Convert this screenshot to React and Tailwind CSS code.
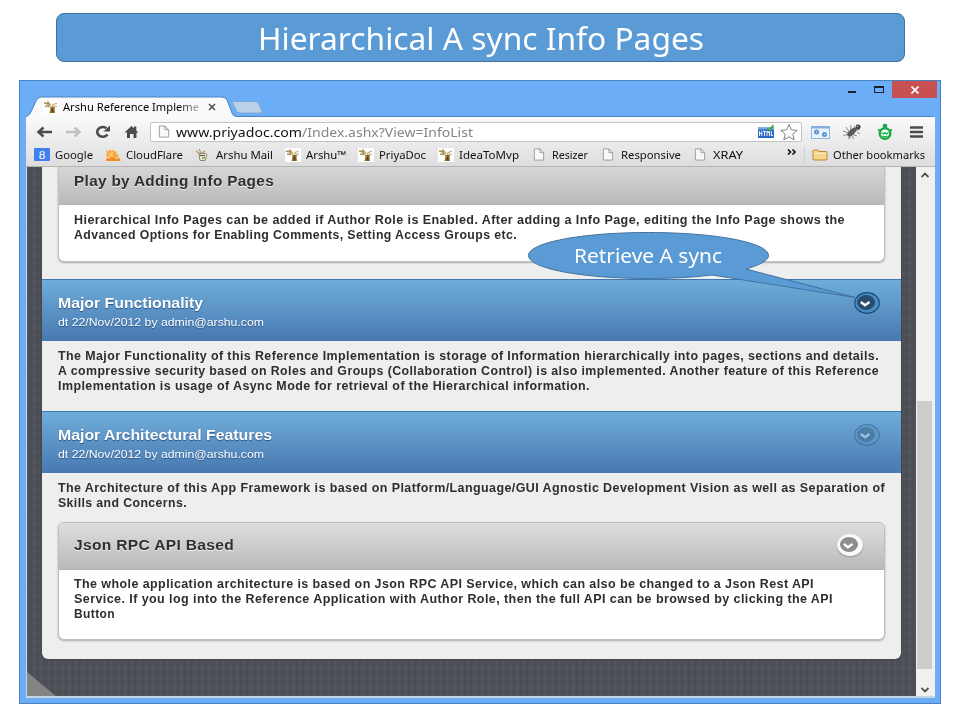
import React, { useLayoutEffect, useRef, useState } from "react";

/* Single line of text stretched horizontally to a given width. */
function Fit({ w, className = "", children }) {
  const ref = useRef(null);
  const [scale, setScale] = useState(1);
  useLayoutEffect(() => {
    setScale(w / ref.current.getBoundingClientRect().width);
  }, [w]);
  return (
    <span className={"block shrink-0 whitespace-nowrap " + className} style={{ width: w }}>
      <span ref={ref} className="inline-block origin-left" style={{ transform: `scaleX(${scale})` }}>
        {children}
      </span>
    </span>
  );
}

const ui = "font-['Noto_Sans',sans-serif]";

function Deer({ className = "" }) {
  return (
    <svg viewBox="0 0 16 14" className={"h-[14px] w-4 shrink-0 bg-white " + className}>
      <path d="M1 3l3 .5 3 3M4.500 1.500l2 3M2 6l4 .5" stroke="#b08f55" strokeWidth="1.500" fill="none" />
      <path d="M6.500 6L5 4.500l2-1.500 1.500 2z" fill="#c4a772" />
      <path d="M9 6l2-2M11 4l3-.5M11 6l3 .5" stroke="#c4a772" strokeWidth="1.200" fill="none" />
      <path d="M7 7q2.500-1 5 0l-.5 2 .5 4H6.500l1-4z" fill="#94702c" />
      <path d="M8.500 8.500h2v4h-2z" fill="#65430f" />
    </svg>
  );
}

function Page() {
  return (
    <svg viewBox="0 0 12 14" className="h-[13px] w-[12px] shrink-0">
      <path d="M1 1h6l4 4v8H1z" fill="#f8f8f8" stroke="#989898" />
      <path d="M7 1v4h4" fill="none" stroke="#989898" />
    </svg>
  );
}

function Google() {
  return (
    <span className="flex h-[13px] w-4 shrink-0 items-center justify-center rounded-[1px] bg-[#3f80ee]">
      <span className="font-['Liberation_Serif',serif] text-[13px] leading-[13px] text-white">8</span>
    </span>
  );
}

function Cloud() {
  return (
    <svg viewBox="0 0 16 14" className="h-[14px] w-4 shrink-0">
      <path d="M1 2l3 1.500L4.500 1l2 2L8.500 1.500l1 2 2-.5v3l2 1-1 6H1l1-4-1.500-2L2 6z" fill="#f8ab3e" />
      <path d="M1 13c0-3 3-4 5-3 1-3 5-2 5 0 3-1 4.500 1 4.500 3z" fill="#f38a26" />
      <path d="M4 6l4 3M2 9l3 1M9 9l4 2M7 4v3" stroke="#fff1d0" strokeWidth=".8" />
    </svg>
  );
}

function MailIcon() {
  return (
    <svg viewBox="0 0 14 14" className="h-[14px] w-[14px] shrink-0">
      <path d="M1 3l4 3M4 1l2 4M10 3l-3 2" stroke="#b39a62" strokeWidth="1.200" />
      <path d="M4 5.500h7l1 1.500-2 5.500H5z" fill="#f1eedf" stroke="#85856f" />
      <path d="M5 7.500h5" stroke="#555" strokeWidth="1.200" fill="none" />
      <path d="M7 10.500l3-1" stroke="#79a233" strokeWidth="1.500" />
    </svg>
  );
}

const bookmarks = [
  { icon: <Google />, slot: "w-[71px]", gap: "w-[21px]", w: 38, label: "Google" },
  { icon: <Cloud />, slot: "w-[90px]", gap: "w-[21px]", w: 57, label: "CloudFlare" },
  { icon: <MailIcon />, slot: "w-[90px]", gap: "w-[21px]", w: 57, label: "Arshu Mail" },
  { icon: <Deer />, slot: "w-[73px]", gap: "w-[21px]", w: 40, label: "Arshu™" },
  { icon: <Deer />, slot: "w-[80px]", gap: "w-[21px]", w: 47, label: "PriyaDoc" },
  { icon: <Deer />, slot: "w-[95px]", gap: "w-[21px]", w: 60, label: "IdeaToMvp" },
  { icon: <Page />, slot: "w-[69px]", gap: "w-[19px]", w: 36, label: "Resizer" },
  { icon: <Page />, slot: "w-[92px]", gap: "w-[19px]", w: 60, label: "Responsive" },
  { icon: <Page />, slot: "w-[93px]", gap: "w-[19px]", w: 30, label: "XRAY" },
];

function TabStrip() {
  return (
    <div className="relative flex h-[37px] items-start">
      <svg viewBox="0 0 922 37" className="absolute inset-0 h-[37px] w-[922px]">
        <path d="M6 37 Q10 36 12 32 L17 21 Q19 17 22 17 H203 Q206 17 208 20 L213 33 Q214 36.5 218 36.5 H913 Q916 36.5 916 40 V42 H6z" fill="#fafafa" stroke="#4d83c0" />
        <path d="M213.500 22.500 Q213 21.500 215 21.500 H236 Q239 21.500 240 24 L243 31.500 Q243 33 241 33 H221 Q218 33 217 30z" fill="#b9d0e8" stroke="#7ea8d8" />
      </svg>
      <div className={"relative flex h-[20px] pl-[24px] mt-[17px] items-center " + ui}>
        <Deer />
        <div className="ml-[4px] [mask-image:linear-gradient(90deg,#000_85%,#0004)]">
          <Fit w={136} className="text-[10.500px] leading-[20px] text-black">Arshu Reference Impleme</Fit>
        </div>
        <svg viewBox="0 0 8 8" className="ml-[9px] h-2 w-2"><path d="M1 1l6 6M7 1l-6 6" stroke="#505050" strokeWidth="1.6" /></svg>
      </div>
      <div className="relative ml-auto mr-[4px] mt-px flex h-[17px] items-center">
        <span className="mr-[18px] mt-[5px] h-[2px] w-[8px] bg-[#1b222b]" />
        <span className="mr-[8px] h-[7px] w-[10px] border border-t-2 border-[#1b222b]" />
        <span className="flex h-[17px] w-[45px] items-center justify-center bg-[#c75050]">
          <svg viewBox="0 0 8 8" className="h-2 w-2"><path d="M.5.5l7 7M7.500.5l-7 7" stroke="#fff" strokeWidth="1.6" /></svg>
        </span>
      </div>
    </div>
  );
}

function AddressBar() {
  return (
    <div className="flex h-[28px] items-center pt-px">
      <svg viewBox="0 0 116 20" className="ml-[8px] h-5 w-[116px] shrink-0" fill="none">
        <path d="M18 10H4.500M9.500 5.500L4.500 10l5 4.500" stroke="#4b4b4b" strokeWidth="2.500" />
        <path d="M32 10h13M40.500 5.500L45.500 10l-5 4.500" stroke="#c0c0c0" strokeWidth="2.500" />
        <path d="M72.500 6.200A5.600 4.900 0 1 0 73.500 12.500" stroke="#4b4b4b" strokeWidth="2.600" />
        <path d="M76 3.500v6h-6.500z" fill="#4b4b4b" />
        <path d="M90.500 10.500l7-6.500 2.500 2.300V4.500h2.300v4l2.200 2h-2V16h-3v-4h-3.500v4h-3v-5.500z" fill="#4b4b4b" />
      </svg>
      <div className="flex h-[20px] w-[652px] shrink-0 items-center rounded-[2px] border border-[#c3c3c3] bg-white pl-[7px]">
        <Page />
        <div className={"ml-[6px] flex text-[13px] leading-[18px] " + ui}>
          <Fit w={126} className="text-[#111]">www.priyadoc.com</Fit>
          <Fit w={171} className="text-[#858585]">/Index.ashx?View=InfoList</Fit>
        </div>
        <svg viewBox="0 0 40 18" className="ml-auto mr-[3px] h-[18px] w-[40px]">
          <rect x="0" y="4.500" width="16" height="10.500" fill="#2c6cc4" />
          <path d="M0 4.500h16v2H0z" fill="#78a8e0" />
          <path d="M1.500 8v5M3.800 8v5M1.500 10.500h2.300M5 8.400h3M6.500 8.400V13M9 13V8l1.200 2L11.400 8v5M13.300 8v4.500H15" stroke="#fff" strokeWidth=".9" fill="none" />
          <path d="M8 4.500l3 1L15.500 1 15.500 4.500 11.500 8z" fill="#44ad3f" />
          <path d="M31 2l2.400 5.400 5.800.5-4.400 3.800 1.400 5.600-5.200-3-5.200 3 1.400-5.600-4.400-3.800 5.800-.5z" fill="#fff" stroke="#808080" transform="translate(0 -.5)" />
        </svg>
      </div>
      <svg viewBox="0 0 114 20" className="ml-[9px] h-5 w-[114px] shrink-0">
        <rect x=".5" y="4.500" width="18" height="12" fill="#e9f3fb" stroke="#8fb5e2" />
        <path d="M0 4h19v2.500H0z" fill="#83aedf" />
        <circle cx="5.500" cy="10" r="1.600" fill="none" stroke="#5c8fcc" strokeWidth="1.800" />
        <circle cx="13.500" cy="12.500" r="1.600" fill="none" stroke="#5c8fcc" strokeWidth="1.800" />
        <path d="M32 9l14 5M35 5l8 12M40 3l-1 14M32 14l17-7M44 4l-7 13M45 3l5 2M46 10l3 2" stroke="#808080" strokeWidth=".9" />
        <ellipse cx="41" cy="10" rx="6" ry="2.600" transform="rotate(-42 41 10)" fill="#5a5a5a" />
        <circle cx="47" cy="5" r="2.400" fill="#3b3b3b" /><circle cx="46.500" cy="4.500" r=".8" fill="#ddd" />
        <circle cx="74" cy="11.500" r="5.300" fill="#e8fff0" stroke="#16aa47" strokeWidth="2.400" />
        <circle cx="74" cy="4" r="2.300" fill="#16aa47" /><path d="M67 7.500l2.500 1.500M81 7.500l-2.500 1.500" stroke="#16aa47" strokeWidth="1.800" />
        <path d="M70.500 10.500l2 1.500 1.500-1.500 1.500 1.500 2-1.500M71.500 14q2.500 1.500 5 0" stroke="#16aa47" strokeWidth="1.100" fill="none" />
        <path d="M99 5.500h13M99 10h13M99 14.500h13" stroke="#4b4b4b" strokeWidth="2.400" />
      </svg>
    </div>
  );
}

function BookmarkBar() {
  return (
    <div className={"flex h-[21px] items-center pl-[8px] pb-[2px] text-[10.500px] leading-[18px] text-[#111] " + ui}>
      {bookmarks.map((b, i) => (
        <div key={i} className={"flex shrink-0 items-center " + b.slot}>
          <span className={"shrink-0 " + b.gap}>{b.icon}</span>
          <Fit w={b.w}>{b.label}</Fit>
        </div>
      ))}
      <svg viewBox="0 0 9 6" className="mb-[6px] h-[6px] w-[9px] shrink-0"><path d="M1 .5L3.500 3 1 5.500M5.500.5L8 3 5.500 5.500" fill="none" stroke="#111" strokeWidth="1.600" /></svg>
      <span className="ml-[8px] h-4 w-px bg-[#c9d3df]" />
      <svg viewBox="0 0 16 12" className="ml-[7px] h-3 w-4 shrink-0"><path d="M1 10V2q0-1 1-1h4l1 1.500h7q1 0 1 1V10q0 1-1 1H2q-1 0-1-1z" fill="#f8d58e" stroke="#ba8434" /><path d="M2 4.500h12" stroke="#fff0c8" /></svg>
      <Fit w={92} className="ml-[5px]">Other bookmarks</Fit>
    </div>
  );
}

function Chevron({ kind }) {
  const c = {
    dark: { ring: "#174e7b", outer: "#4a8cc4", inner: "#294d6e", mark: "#fff", o: 1 },
    faded: { ring: "#29618f", outer: "#5c99ca", inner: "#3c6787", mark: "#cfe6f5", o: 0.55 },
    light: { ring: "#f9f9f9", outer: "#fafafa", inner: "#8d8d8d", mark: "#fff", o: 1 },
  }[kind];
  return (
    <svg viewBox="0 0 30 26" className="h-[26px] w-[30px] shrink-0" opacity={c.o}>
      {kind === "light" && <ellipse cx="15" cy="14" rx="13.500" ry="11.500" fill="#000" opacity=".15" />}
      <ellipse cx="15" cy="13" rx="12.300" ry="10.300" fill={c.outer} stroke={c.ring} strokeWidth="1.200" />
      <ellipse cx="14" cy="12.500" rx="9" ry="7.600" fill={c.inner} />
      <path d="M8.800 12l4.200 3.200 4.500-3.200" fill="none" stroke={c.mark} strokeWidth="2.300" />
    </svg>
  );
}

function Lines({ items, className = "" }) {
  return (
    <div className={"text-[12px] font-bold leading-[15px] tracking-[0.4px] text-[#2e2e2e] " + className}>
      {items.map(([t, w]) => <Fit key={t} w={w}>{t}</Fit>)}
    </div>
  );
}

function BlueBar({ title, w, kind }) {
  return (
    <div className="flex h-[62px] items-start border-t border-[#3f78b3] bg-linear-to-b from-[#6fadd9] to-[#4879b1] pl-4 text-white">
      <div>
        <Fit w={w} className="mt-[13px] text-[14px] font-bold leading-[20px] [text-shadow:0_1px_1px_#285080]">{title}</Fit>
        <Fit w={206} className="mt-[1px] text-[11px] leading-[17px] [text-shadow:0_1px_1px_#285080]">dt 22/Nov/2012 by admin@arshu.com</Fit>
      </div>
      <div className="ml-auto mr-[19px] mt-[10px]"><Chevron kind={kind} /></div>
    </div>
  );
}

function Callout() {
  return (
    <div className={"absolute left-[528px] top-[232px] h-[75px] w-[340px] " + ui}>
      <svg viewBox="0 0 340 75" className="absolute inset-0 h-[75px] w-[340px]">
        <path d="M218 37 C232 33 241 28 240.500 23.500 C240.500 10.500 187 .5 120.500 .5 S.5 10.500 .5 23.500 54 46.500 120.500 46.500 Q156 46.500 184 43 L327 65.500z" fill="#5b9bd5" stroke="#41719c" strokeLinejoin="round" />
      </svg>
      <Fit w={148} className="relative ml-[46px] mt-[10px] text-[19.500px] leading-[28px] text-white">Retrieve A sync</Fit>
    </div>
  );
}

export default function App() {
  return (
    <div className="relative h-[720px] w-[960px] overflow-hidden bg-white pt-[13px] font-['Liberation_Sans',Arial,sans-serif]">
      <div className={"ml-[56px] flex h-[49px] w-[849px] justify-center rounded-[8px] border border-[#41719c] bg-[#5b9bd5] text-[31.500px] leading-[47px] text-white " + ui}>
        <Fit w={446}>Hierarchical A sync Info Pages</Fit>
      </div>

      <div className="ml-[19px] mt-[18px] flex h-[624px] w-[922px] flex-col border border-[#4a82bf] bg-[#6cadf8]">
        <div className="-ml-px -mt-px h-[37px] w-[922px]"><TabStrip /></div>
        <div className="relative ml-[6px] h-[50px] w-[909px] border-b border-[#b5b5b5] bg-linear-to-b from-[#fafafa] to-[#dddddd]">
          <AddressBar />
          <BookmarkBar />
        </div>
        <div className="ml-[6px] flex h-[531px] w-[909px] border-b-2 border-l border-[#c6d5e4]">
          <div className="w-[889px] overflow-hidden bg-[#4e5058] bg-[repeating-linear-gradient(90deg,#ffffff09_0_1px,transparent_1px_3px,#0000000d_3px_4px,transparent_4px_7px),repeating-linear-gradient(0deg,#ffffff06_0_1px,transparent_1px_4px,#0000000a_4px_5px,transparent_5px_9px)]">
            <div className="ml-[15px] h-[492px] w-[859px] rounded-b-[6px] bg-[#eee] shadow-[0_0_2px_#222]">
              <div className="ml-[16px] h-[95px] w-[827px] overflow-hidden rounded-b-[6px] border border-t-0 border-[#c0c0c0] bg-white shadow-[0_1px_2px_#aaa]">
                <div className="h-[38px] border-b border-[#b2b2b2] bg-linear-to-b from-[#d6d6d6] to-[#bababa] pl-[15px]">
                  <Fit w={200} className="pt-[4px] text-[14px] font-bold leading-[20px] tracking-[0.3px] text-[#2f2f2f] [text-shadow:0_1px_0_#eee]">Play by Adding Info Pages</Fit>
                </div>
                <Lines className="pl-[15px] pt-[8px]" items={[
                  ["Hierarchical Info Pages can be added if Author Role is Enabled. After adding a Info Page, editing the Info Page shows the", 771],
                  ["Advanced Options for Enabling Comments, Setting Access Groups etc.", 443],
                ]} />
              </div>
              <div className="h-[17px]" />
              <BlueBar title="Major Functionality" w={145} kind="dark" />
              <Lines className="h-[70px] pl-[16px] pt-[8px]" items={[
                ["The Major Functionality of this Reference Implementation is storage of Information hierarchically into pages, sections and details.", 821],
                ["A compressive security based on Roles and Groups (Collaboration Control) is also implemented. Another feature of this Reference", 821],
                ["Implementation is usage of Async Mode for retrieval of the Hierarchical information.", 532],
              ]} />
              <BlueBar title="Major Architectural Features" w={214} kind="faded" />
              <Lines className="h-[49px] pl-[16px] pt-[8px]" items={[
                ["The Architecture of this App Framework is based on Platform/Language/GUI Agnostic Development Vision as well as Separation of", 827],
                ["Skills and Concerns.", 129],
              ]} />
              <div className="ml-[16px] h-[118px] w-[827px] overflow-hidden rounded-[6px] border border-[#bdbdbd] bg-white shadow-[0_1px_2px_#aaa]">
                <div className="flex h-[47px] items-start border-b border-[#b2b2b2] bg-linear-to-b from-[#dedede] to-[#bababa] pl-[15px] pt-[9px]">
                  <Fit w={160} className="mt-[3px] text-[14px] font-bold leading-[20px] tracking-[0.3px] text-[#2f2f2f] [text-shadow:0_1px_0_#eee]">Json RPC API Based</Fit>
                  <div className="ml-auto mr-[19px]"><Chevron kind="light" /></div>
                </div>
                <Lines className="pl-[15px] pt-[7px]" items={[
                  ["The whole application architecture is based on Json RPC API Service, which can also be changed to a Json Rest API", 740],
                  ["Service. If you log into the Reference Application with Author Role, then the full API can be browsed by clicking the API", 759],
                  ["Button", 41],
                ]} />
              </div>
            </div>
            <svg viewBox="0 0 30 25" className="mt-[13px] h-[25px] w-[30px]"><path d="M0 0l30 25H0z" fill="#848484" /></svg>
          </div>
          <div className="flex w-[19px] flex-col items-center bg-[#f0f0f0] pr-[2px]">
            <svg viewBox="0 0 8 6" className="mt-[5px] h-[6px] w-2"><path d="M.5 5L4 1.500 7.500 5" fill="none" stroke="#505050" strokeWidth="1.800" /></svg>
            <div className="mt-[223px] h-[268px] w-[15px] bg-[#cdcdcd]" />
            <svg viewBox="0 0 8 6" className="mt-[18px] h-[6px] w-2"><path d="M.5 1L4 4.500 7.500 1" fill="none" stroke="#505050" strokeWidth="1.800" /></svg>
          </div>
        </div>
      </div>
      <Callout />
    </div>
  );
}
